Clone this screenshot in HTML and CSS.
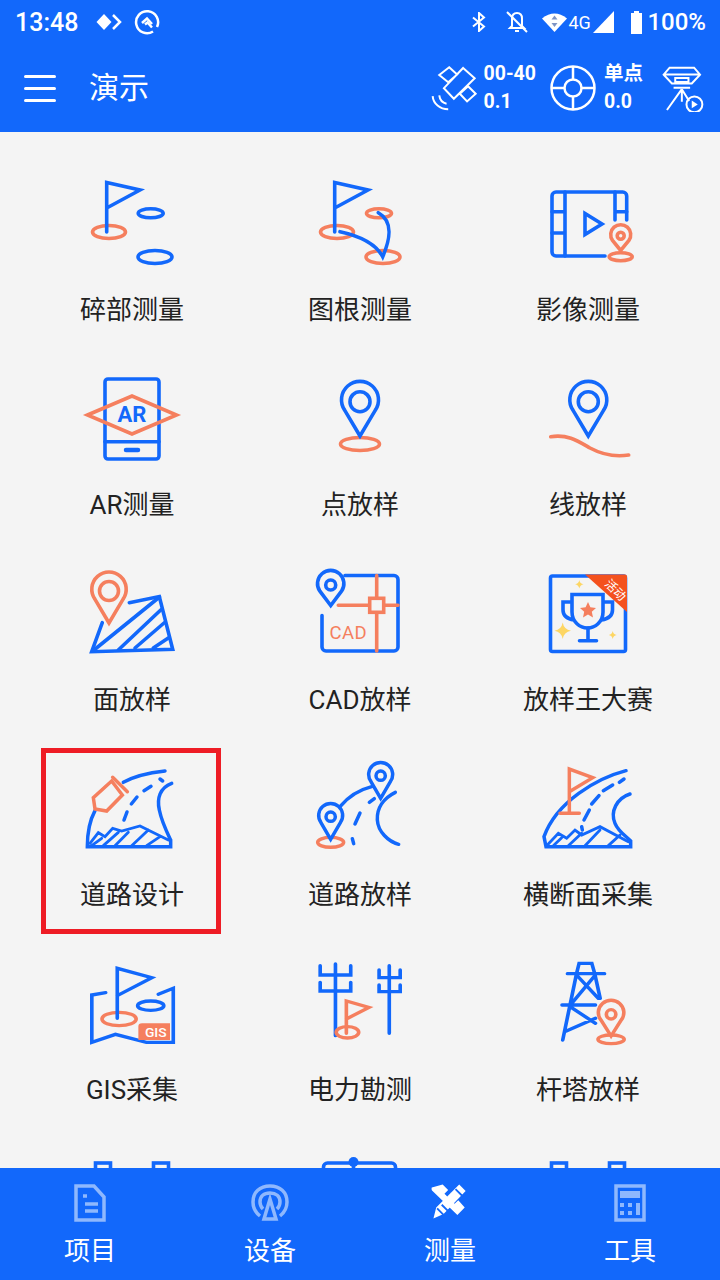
FILE: index.html
```html
<!DOCTYPE html>
<html lang="zh-CN">
<head>
  <meta charset="UTF-8" />
  <meta name="viewport" content="width=device-width, initial-scale=1.0"/>
  <title>测量</title>
  <link rel="stylesheet" href="styles.css">
</head>
<body>
<div class="page">

  <header class="top">
    <div class="status">
      <span class="time">13:48</span>
      <svg class="st-link" viewBox="0 0 26 18"><path class="wf" d="M8 1l7.5 8L8 17 .5 9z"/><path class="ws" d="M17 2l7 7-7 7"/></svg>
      <svg class="st-q" viewBox="0 0 26 26"><path class="ws" d="M19 22.500A11 11 0 1 1 23 18"/><path class="ws" d="M8 14L13 9.500l5 5.500"/><path class="ws" d="M11 15.500l2.500-2 4.500 5"/></svg>
      <span class="status-right">
        <svg class="st-bt" viewBox="0 0 14 20"><path class="ws2" d="M1 5.500l11 9L7 19V1l5 4.500L1 14.500"/></svg>
        <svg class="st-bell" viewBox="0 0 24 24"><path class="ws2" d="M7 8.500C7 5 9 3 12 3s5 2 5 5.500V16l2 2H5l2-2z"/><path class="ws2" d="M10 21h4"/><path class="ws2" d="M2 2l20 20"/></svg>
        <svg class="st-wifi" viewBox="0 0 25 20"><path class="wf" d="M0 6.500Q12.500-3.500 25 6.500L12.500 20z"/><path class="gf" d="M12.500 3.500l3 4h-6zM12.500 15l3-4h-6z"/></svg>
        <span class="net">4G</span>
        <svg class="st-signal" viewBox="0 0 21 22"><path class="wf" d="M21 0v22H0z"/></svg>
        <svg class="st-batt" viewBox="0 0 11 23"><path class="wf" d="M3 0h5v2h3v21H0V2h3z"/></svg>
        <span class="pct">100%</span>
      </span>
    </div>
    <div class="appbar">
      <div class="burger"><i></i><i></i><i></i></div>
      <div class="title">演示</div>
      <div class="gps">
        <svg class="sat" viewBox="30 185 145 145">
          <path class="ws3" d="M130 197l35 31-63 62-30-32zM88 195l24 22-27 23-27-22zM145 252l23 23-26 23-22-23z"/>
          <path class="ws3" d="M38 282c2 23 22 40 47 40M58 280c2 15 10 23 22 25"/>
        </svg>
        <div class="stat"><b>00-40</b><b>0.1</b></div>
        <svg class="ring" viewBox="0 0 48 48">
          <circle class="ws" cx="24" cy="24" r="21.500"/><circle class="ws" cx="24" cy="24" r="8.500"/>
          <path class="ws" d="M24 3v12.500M24 32.500V45M3 24h12.500M32.500 24H45"/>
        </svg>
        <div class="stat"><b>单点</b><b>0.0</b></div>
        <svg class="tripod" viewBox="725 190 130 140">
          <path class="ws3" d="M748 197h74l18 21-25 27h-60l-25-27zM730 218h110M765 228h40v12h-40zM760 258h50"/>
          <path class="ws3" d="M785 262l-45 63M785 262v38M785 262l22 36"/>
          <circle class="ws3" cx="823" cy="308" r="24"/><path class="wf" d="M815 296l18 12-18 12z"/>
        </svg>
      </div>
    </div>
  </header>

  <main class="main">
    <div class="grid">

      <div class="cell">
        <svg class="ico" viewBox="0 0 120 100">
          <ellipse class="o" cx="37" cy="62" rx="16.500" ry="6.500"/>
          <path class="b" d="M34.700 62V12.500L68 20 34.700 38"/>
          <ellipse class="b" cx="78.700" cy="43.300" rx="12.500" ry="4.500"/>
          <ellipse class="b" cx="83" cy="87" rx="17" ry="6.500"/>
        </svg>
        <div class="label">碎部测量</div>
      </div>

      <div class="cell">
        <svg class="ico" viewBox="0 0 120 100">
          <ellipse class="o" cx="37" cy="62" rx="16.500" ry="6.500"/>
          <ellipse class="o" cx="79" cy="43.300" rx="12.500" ry="4.500"/>
          <ellipse class="o" cx="83" cy="87" rx="17" ry="6.500"/>
          <path class="b" d="M34.700 62V12.500L68 20 34.700 38"/>
          <path class="b" d="M40 61.700C60 66 76 74 82.700 86.700 89 72 95 52 78.300 42.700"/>
        </svg>
        <div class="label">图根测量</div>
      </div>

      <div class="cell">
        <svg class="ico" viewBox="0 0 120 100">
          <path class="b" d="M98.700 50V26a4 4 0 0 0-4-4H28a4 4 0 0 0-4 4v56a4 4 0 0 0 4 4h49"/>
          <path class="b" d="M37 22v64M24 41.700h13M24 63h13M87 22v28M87 41.700h11.700"/>
          <path class="b" d="M57 43.500v21L74 54z"/>
          <path class="o k" d="M92.700 80.500L84.500 70.400A10 10 0 1 1 100.900 70.400Z"/>
          <circle class="o" cx="92.700" cy="65.700" r="3.500"/>
          <ellipse class="o" cx="92.700" cy="86.700" rx="11.500" ry="4"/>
        </svg>
        <div class="label">影像测量</div>
      </div>

      <div class="cell">
        <svg class="ico" viewBox="0 0 120 100">
          <rect class="b" x="33" y="14" width="54" height="80" rx="3"/>
          <path class="b" d="M33 76.700h54"/>
          <path class="b thick" d="M54 85h12"/>
          <path class="o" d="M15.500 50L60 31l44.500 19L60 69z"/>
          <text class="ar" x="60" y="57">AR</text>
        </svg>
        <div class="label">AR测量</div>
      </div>

      <div class="cell">
        <svg class="ico" viewBox="0 0 120 100">
          <ellipse class="o" cx="60" cy="79" rx="19.500" ry="6.500"/>
          <path class="b" d="M60 71L44.800 45.400A18.500 18.500 0 1 1 75.200 45.400Z"/>
          <circle class="b" cx="60" cy="36.700" r="10"/>
        </svg>
        <div class="label">点放样</div>
      </div>

      <div class="cell">
        <svg class="ico" viewBox="0 0 120 100">
          <path class="o" d="M22.700 71.700C40 69 50 76 62 83 75 90 88 92 100.700 90"/>
          <path class="b" d="M60.300 71L45.100 45.400A18.500 18.500 0 1 1 75.500 45.400Z"/>
          <circle class="b" cx="60.300" cy="36.700" r="10"/>
        </svg>
        <div class="label">线放样</div>
      </div>

      <div class="cell">
        <svg class="ico" viewBox="0 0 120 100">
          <path class="b" d="M57.300 42.700L87.300 36.500 100.700 89.300 19.700 91.700 30.300 62.700"/>
          <path class="b" d="M22 90L87.500 37M46.300 90L88.700 50M63 88L92 63M81.300 88L96.300 78"/>
          <path class="o" d="M37 63L22.900 39.100A17.200 17.200 0 1 1 51.100 39.100Z"/>
          <circle class="o" cx="37" cy="31" r="9.500"/>
        </svg>
        <div class="label">面放样</div>
      </div>

      <div class="cell">
        <svg class="ico" viewBox="0 0 120 100">
          <path class="b" d="M45 15.500h49a4 4 0 0 1 4 4V87a4 4 0 0 1-4 4H26a4 4 0 0 1-4-4V55.500"/>
          <path class="o" d="M76.700 15.500V91M38.300 45.300H98"/>
          <rect class="o k" x="69.700" y="38.300" width="14" height="14"/>
          <text class="cad" x="29.500" y="78.500">CAD</text>
          <path class="b k" d="M30.700 45.500L19.900 31.200A13.200 13.200 0 1 1 41.500 31.200Z"/>
          <circle class="b" cx="30.700" cy="25" r="5"/>
        </svg>
        <div class="label">CAD放样</div>
      </div>

      <div class="cell">
        <svg class="ico" viewBox="0 0 120 100">
          <rect class="b" x="22.500" y="16" width="75" height="75.500" rx="2"/>
          <path class="rf" d="M57 14.500h40a2 2 0 0 1 2 2v35.500z"/>
          <text class="huo" x="0" y="0" transform="translate(84.500 33) rotate(45)">活动</text>
          <path class="b" d="M44 34.500h31V52c0 10-8 16-15.500 16S44 62 44 52zM44 42h-9v8c0 6 5 9 11 10M75 42h9.500v8c0 6-5 9-11 10"/>
          <path class="b" d="M60 68v12.700M51.500 80.700h17"/>
          <path class="sf" d="M60 42l2.400 5.300 5.600.6-4.200 3.800 1.200 5.800-5-3-5 3 1.200-5.800-4.200-3.800 5.600-.6z"/>
          <path class="yf" d="M34.700 62.500q1.200 7 8.300 8.200-7.100 1.200-8.300 8.300-1.200-7.100-8.200-8.300 7-1.200 8.200-8.200zM51.300 20q.7 3.700 4.200 4.300-3.500.6-4.200 4.300-.6-3.700-4.200-4.300 3.600-.6 4.200-4.300zM84.700 71q.6 3.500 4 4-3.400.6-4 4-.6-3.400-4-4 3.400-.5 4-4z"/>
        </svg>
        <div class="label">放样王大赛</div>
      </div>

      <div class="cell selected">
        <svg class="ico z3" viewBox="96 30 360 300">
          <path class="b" d="M375 78C330 83 285 92 250 112M165 197C150 225 142 260 142 305H392V285C380 260 365 230 358 195 350 160 360 128 395 115"/>
          <path class="b thin" d="M150 295L175 263 195 275 218 250 245 258 300 243 385 285M155 302L185 280M190 302L235 262M225 302L265 262M275 302L325 255M320 302L360 275"/>
          <path class="b" d="M360 102L368 108M312 137L333 124M274 177L291 156M252 225L261 201"/>
          <path class="o" d="M215 108L247 150 200 198 165 192 160 158Z"/>
          <path class="o" d="M218 97L262 140"/>
        </svg>
        <div class="label">道路设计</div>
      </div>

      <div class="cell">
        <svg class="ico z3" viewBox="780 30 360 300">
          <ellipse class="o" cx="872" cy="292" rx="39" ry="15"/>
          <path class="b" d="M900 185C925 155 955 135 995 125M988 172L1003 161M945 237L960 204M937 281L941 296"/>
          <path class="b" d="M1066 142C1030 160 1010 190 1012 225 1014 260 1045 290 1076 298"/>
          <path class="b k" d="M872 283L842.500 232A36 36 0 1 1 901.500 232Z"/>
          <circle class="b" cx="872" cy="215" r="14"/>
          <path class="b k" d="M1022 160L992.500 109A36 36 0 1 1 1051.500 109Z"/>
          <circle class="b" cx="1022" cy="92" r="14"/>
        </svg>
        <div class="label">道路放样</div>
      </div>

      <div class="cell">
        <svg class="ico z3" viewBox="24 0 360 300">
          <path class="b" d="M318 47C230 70 110 140 72 245L78 275H332V258C320 245 295 230 285 205 270 170 290 130 330 117"/>
          <path class="b thin" d="M80 272L115 235 140 250 165 225 185 240 240 215 325 260M100 272L125 248M145 272L185 235M195 272L240 225M265 272L300 240"/>
          <path class="b" d="M298 82L312 72M250 107L278 90M215 147L237 122M192 195L208 165M185 215L187 225"/>
          <path class="o" d="M148 175V42L218 68 148 110M120 175H178"/>
        </svg>
        <div class="label">横断面采集</div>
      </div>

      <div class="cell">
        <svg class="ico z11" viewBox="5.500 -15 330 300" preserveAspectRatio="none">
          <path class="b" d="M98 113L60 120V262L125 238 210 262H284V100L243 118"/>
          <ellipse class="o" cx="135" cy="192" rx="47" ry="20"/>
          <path class="b" d="M130 190V40L225 68 130 122"/>
          <ellipse class="b" cx="222" cy="152" rx="36" ry="14"/>
          <path class="of" d="M198 205h77v50h-87v-40a10 10 0 0 1 10-10z"/>
          <text class="gis" x="236" y="247">GIS</text>
        </svg>
        <div class="label">GIS采集</div>
      </div>

      <div class="cell">
        <svg class="ico z11" viewBox="632.500 -15 330 300" preserveAspectRatio="none">
          <path class="b" d="M730 27V242M688 32V60H772V32M688 82V108H772V82M878 32V235M850 45V68H908V45M850 90V110H908V90"/>
          <ellipse class="o" cx="763" cy="232" rx="31" ry="17"/>
          <path class="o" d="M760 235V138L822 157 760 192"/>
        </svg>
        <div class="label">电力勘测</div>
      </div>

      <div class="cell">
        <svg class="ico z11" viewBox="1259.500 -15 330 300" preserveAspectRatio="none">
          <path class="b" d="M1393 56L1400 25H1435L1443 56M1368 56H1470M1393 56L1355 255M1443 56L1458 130M1393 60L1453 130M1443 62L1380 145M1353 150H1445M1375 155L1445 205M1445 190L1365 228"/>
          <path class="o k" d="M1488 243L1460 195A35 37 0 1 1 1516 195Z"/>
          <ellipse class="o" cx="1488" cy="178" rx="13" ry="14"/>
          <ellipse class="o" cx="1488" cy="253" rx="36" ry="13"/>
        </svg>
        <div class="label">杆塔放样</div>
      </div>

      <div class="cell">
        <svg class="ico" viewBox="0 0 120 100">
          <rect class="b" x="23.500" y="18" width="15" height="40"/>
          <rect class="b" x="81.500" y="18" width="15" height="40"/>
        </svg>
      </div>

      <div class="cell">
        <svg class="ico" viewBox="0 0 120 100">
          <rect class="b" x="23.500" y="18" width="72" height="40" rx="4"/>
          <circle class="bf" cx="53.500" cy="17" r="5"/>
          <path class="b" d="M53.500 17v20"/>
        </svg>
      </div>

      <div class="cell">
        <svg class="ico" viewBox="0 0 120 100">
          <rect class="b" x="23.500" y="18" width="15" height="40"/>
          <rect class="b" x="81.500" y="18" width="15" height="40"/>
        </svg>
      </div>

    </div>
  </main>

  <nav class="tabs">
    <div class="tab">
      <svg class="tab-ico" viewBox="0 0 40 40">
        <path class="ls" d="M6 4h18l10 11v23H6z"/>
        <path class="ls" d="M13 14h4M15 22h13M15 29h13"/>
      </svg>
      <span>项目</span>
    </div>
    <div class="tab">
      <svg class="tab-ico" viewBox="0 0 40 40">
        <path class="ls" d="M10 34C5 30 3 25 3 20 3 10 10 4 20 4s17 6 17 16c0 5-2 10-7 14"/>
        <path class="ls" d="M13 27c-2-2-3-4-3-7 0-6 4-9 10-9s10 3 10 9c0 3-1 5-3 7"/>
        <path class="ls" d="M20 17l-6 20h12z"/>
      </svg>
      <span>设备</span>
    </div>
    <div class="tab">
      <svg class="tab-ico pen" viewBox="0 0 40 40">
        <path class="wf" d="M12 1l6 6-4 4 3 3 4-4 5 5-4 4 3 3 4-4 7 8-8 8-30-29zM30 1l7 7L13 33l-11 5 3-12z"/>
        <path class="cut" d="M26 6l8 8M11 23l7 7M6 27l7 7"/>
      </svg>
      <span>测量</span>
    </div>
    <div class="tab">
      <svg class="tab-ico" viewBox="0 0 40 40">
        <rect class="ls" x="6" y="4" width="28" height="34"/>
        <rect class="lf" x="10" y="9" width="20" height="7"/>
        <path class="lf" d="M10 21h4v4h-4zM18 21h4v4h-4zM26 21h4v12h-4zM10 29h4v4h-4zM18 29h4v4h-4z"/>
      </svg>
      <span>工具</span>
    </div>
  </nav>

</div>
</body>
</html>
```

FILE: styles.css
```css
*, *::after {
  box-sizing: border-box;
}
html, body {
  margin: 0;
  padding: 0;
}
body {
  font-family: Roboto, "Noto Sans CJK SC", sans-serif;
  background-color: #f4f4f4;
}
svg {
  display: block;
  flex: none;
}
.page {
  width: 720px;
  height: 1280px;
  display: flex;
  flex-direction: column;
  overflow: hidden;
}

/* top */
.top {
  background-color: #1268fb;
  color: #fff;
  height: 132px;
  flex: none;
}
.status {
  height: 44px;
  display: flex;
  align-items: center;
  padding: 0 14px 0 15px;
}
.time {
  font-size: 25px;
  font-weight: 500;
  width: 81px;
}
.st-link {
  width: 26px;
  height: 18px;
}
.st-q {
  width: 26px;
  height: 26px;
  margin-left: 12px;
}
.status-right {
  margin-left: auto;
  display: flex;
  align-items: center;
}
.st-bt {
  width: 14px;
  height: 20px;
}
.st-bell {
  width: 24px;
  height: 24px;
  margin-left: 19px;
}
.st-wifi {
  width: 25px;
  height: 20px;
  margin-left: 13px;
}
.net {
  font-size: 18px;
  width: 25px;
  margin-left: 1px;
}
.st-signal {
  width: 21px;
  height: 22px;
}
.st-batt {
  width: 11px;
  height: 23px;
  margin-left: 17px;
}
.pct {
  font-size: 24px;
  font-weight: 500;
  margin-left: 5px;
}
.appbar {
  height: 88px;
  display: flex;
  align-items: center;
  padding: 0 15px 0 24px;
}
.burger {
  width: 32px;
  display: flex;
  flex-direction: column;
  gap: 9px;
}
.burger i {
  display: block;
  height: 3px;
  border-radius: 2px;
  background-color: #fff;
}
.title {
  font-size: 30px;
  margin: 0 0 6px 33px;
}
.gps {
  margin-left: auto;
  display: flex;
  align-items: center;
}
.sat {
  width: 48px;
  height: 48px;
}
.stat {
  display: flex;
  flex-direction: column;
  font-size: 19.500px;
  line-height: 28px;
  margin-left: 6px;
}
.stat b {
  font-weight: 700;
}
.ring {
  width: 48px;
  height: 48px;
  margin-left: 13px;
}
.ring + .stat {
  margin-left: 7px;
}
.tripod {
  width: 43px;
  height: 47px;
  margin-left: 19px;
}

/* status and toolbar glyphs */
.wf {
  fill: #fff;
}
.gf {
  fill: #7d94c4;
}
.ws, .ws2, .ws3 {
  fill: none;
  stroke: #fff;
  stroke-width: 2.500;
}
.ws2 {
  stroke-width: 2;
}
.ws3 {
  stroke-width: 6;
}

/* grid */
.main {
  flex: 1;
  overflow: hidden;
  background-color: #f4f4f4;
}
.grid {
  display: grid;
  grid-template-columns: repeat(3, 228px);
  grid-auto-rows: 195px;
  padding: 18px 18px 0;
}
.cell {
  position: relative;
  display: flex;
  flex-direction: column;
  align-items: center;
  padding-top: 20px;
}
.selected::after {
  content: "";
  position: absolute;
  left: 23px;
  top: 13px;
  width: 180px;
  height: 186px;
  border: 5px solid #ee1c25;
}
.label {
  font-size: 26px;
  line-height: 36px;
  margin-top: 22px;
  color: #222;
  white-space: nowrap;
}
.ico {
  width: 120px;
  height: 100px;
  stroke-width: 3.600;
  stroke-linecap: round;
}
.z3 {
  stroke-width: 10.500;
}
.z11 {
  stroke-width: 10;
}
.b {
  fill: none;
  stroke: #1268fb;
}
.o {
  fill: none;
  stroke: #f57f5e;
}
.k {
  fill: #f4f4f4;
}
.thin {
  stroke-width: 8.500;
}
.thick {
  stroke-width: 4.500;
}
.bf {
  fill: #1268fb;
}
.of {
  fill: #f57f5e;
}
.rf {
  fill: #f4511e;
}
.sf {
  fill: #f57f5e;
}
.yf {
  fill: #fdd663;
}
.ar {
  fill: #1268fb;
  font-size: 22px;
  font-weight: 700;
  text-anchor: middle;
}
.cad {
  fill: #f57f5e;
  font-size: 18.500px;
  letter-spacing: .5px;
}
.huo {
  fill: #fff;
  font-size: 12px;
  text-anchor: middle;
}
.gis {
  fill: #fff;
  font-size: 38px;
  font-weight: 500;
  text-anchor: middle;
}

/* tabs */
.tabs {
  flex: none;
  height: 112px;
  background-color: #1268fb;
  display: grid;
  grid-template-columns: repeat(4, 180px);
}
.tab {
  display: flex;
  flex-direction: column;
  align-items: center;
  padding-top: 14px;
  color: #fff;
  font-size: 26px;
  line-height: 36px;
}
.tab span {
  margin-top: 11px;
}
.tab-ico {
  width: 40px;
  height: 40px;
}
.pen {
  transform: scale(.92);
}
.ls {
  fill: none;
  stroke: #8fb8fd;
  stroke-width: 3.500;
}
.lf {
  fill: #8fb8fd;
}
.cut {
  fill: none;
  stroke: #1268fb;
  stroke-width: 2;
}
```
